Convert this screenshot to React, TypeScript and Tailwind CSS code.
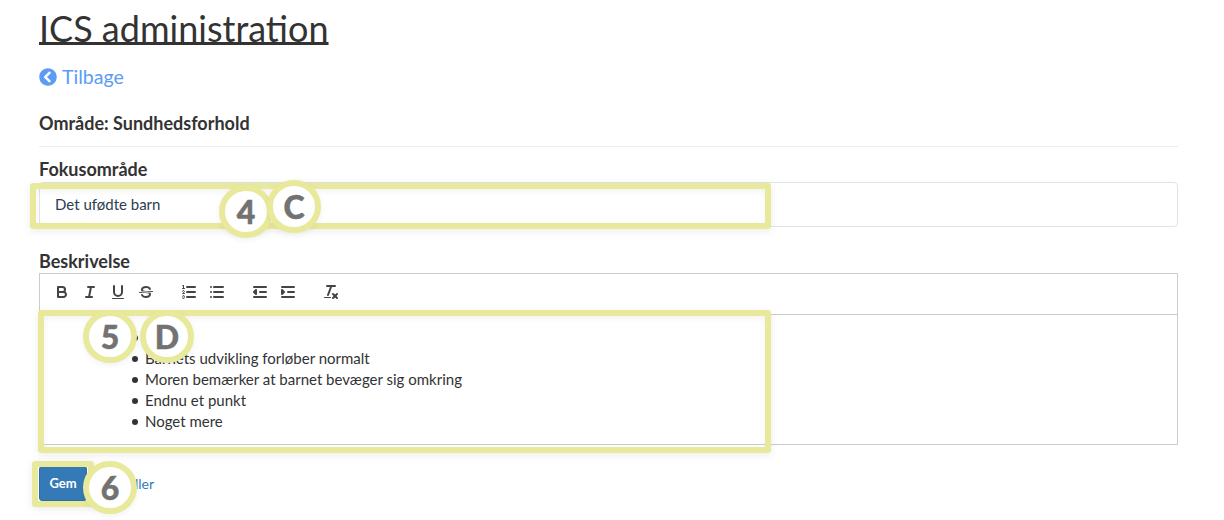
import { FaChevronCircleLeft } from "react-icons/fa";

const items = [
  "",
  "Barnets udvikling forløber normalt",
  "Moren bemærker at barnet bevæger sig omkring",
  "Endnu et punkt",
  "Noget mere",
];

function ToolButton({ children, className = "" }: { children: React.ReactNode; className?: string }) {
  return (
    <span className={`flex h-6 w-7 items-center justify-center ${className}`}>
      <svg
        viewBox="0 0 18 18"
        className="h-[18px] w-[18px] fill-none stroke-[#444] [stroke-linecap:round] [stroke-linejoin:round] [stroke-width:2]"
      >
        {children}
      </svg>
    </span>
  );
}

function Toolbar() {
  const thin = "[stroke-width:1]";
  return (
    <div className="flex h-[41px] items-start border-b border-[#ccc] pl-2 pt-[6px]">
      <ToolButton>
        <path d="M5,4H9.5A2.5,2.5,0,0,1,12,6.5v0A2.5,2.5,0,0,1,9.5,9H5V4Z" />
        <path d="M5,9h5.5A2.5,2.5,0,0,1,13,11.5v0A2.5,2.5,0,0,1,10.5,14H5V9Z" />
      </ToolButton>
      <ToolButton>
        <line x1="7" x2="13" y1="4" y2="4" />
        <line x1="5" x2="11" y1="14" y2="14" />
        <line x1="8" x2="10" y1="14" y2="4" />
      </ToolButton>
      <ToolButton>
        <path d="M5,3V9a4.012,4.012,0,0,0,4,4H9a4.012,4.012,0,0,0,4-4V3" />
        <rect x="3" y="15" width="12" height="1" rx="0.5" className="fill-[#444] stroke-none" />
      </ToolButton>
      <ToolButton>
        <line x1="15.5" x2="2.5" y1="8.5" y2="9.5" className={thin} />
        <path
          className="fill-[#444] stroke-none"
          d="M9.007,8C6.542,7.791,6,7.519,6,6.5,6,5.792,7.283,5,9,5c1.571,0,2.765.679,2.969,1.309a1,1,0,0,0,1.9-.617C13.356,4.106,11.354,3,9,3,6.2,3,4,4.538,4,6.5a3.2,3.2,0,0,0,.5,1.843Z"
        />
        <path
          className="fill-[#444] stroke-none"
          d="M8.984,10C11.457,10.208,12,10.479,12,11.5c0,.708-1.283,1.5-3,1.5-1.571,0-2.765-.679-2.969-1.309a1,1,0,1,0-1.9.617C4.644,13.894,6.646,15,9,15c2.8,0,5-1.538,5-3.5a3.2,3.2,0,0,0-.5-1.843Z"
        />
      </ToolButton>
      <ToolButton className="ml-[15px]">
        <line x1="7" x2="15" y1="4" y2="4" />
        <line x1="7" x2="15" y1="9" y2="9" />
        <line x1="7" x2="15" y1="14" y2="14" />
        <line x1="2.5" x2="4.5" y1="5.5" y2="5.5" className={thin} />
        <path
          className="fill-[#444] stroke-none"
          d="M3.5,6A0.5,0.5,0,0,1,3,5.5V3.085l-0.276.138A0.5,0.5,0,0,1,2.053,3c-0.124-.247-0.023-0.324.224-0.447l1-.5A0.5,0.5,0,0,1,4,2.5v3A0.5,0.5,0,0,1,3.5,6Z"
        />
        <path className={thin} d="M4.5,10.5h-2c0-.234,1.85-1.076,1.85-2.234A0.959,0.959,0,0,0,2.5,8.156" />
        <path
          className={thin}
          d="M2.5,14.846a0.959,0.959,0,0,0,1.85-.109A0.7,0.7,0,0,0,3.75,14a0.688,0.688,0,0,0,.6-0.736,0.959,0.959,0,0,0-1.85-.109"
        />
      </ToolButton>
      <ToolButton>
        <line x1="6" x2="15" y1="4" y2="4" />
        <line x1="6" x2="15" y1="9" y2="9" />
        <line x1="6" x2="15" y1="14" y2="14" />
        <line x1="3" x2="3" y1="4" y2="4" />
        <line x1="3" x2="3" y1="9" y2="9" />
        <line x1="3" x2="3" y1="14" y2="14" />
      </ToolButton>
      <ToolButton className="ml-[15px]">
        <line x1="3" x2="15" y1="14" y2="14" />
        <line x1="3" x2="15" y1="4" y2="4" />
        <line x1="9" x2="15" y1="9" y2="9" />
        <polyline points="5 7 5 11 3 9 5 7" className="fill-[#444]" />
      </ToolButton>
      <ToolButton>
        <line x1="3" x2="15" y1="14" y2="14" />
        <line x1="3" x2="15" y1="4" y2="4" />
        <line x1="9" x2="15" y1="9" y2="9" />
        <polyline points="3 7 3 11 5 9 3 7" className="fill-[#444]" />
      </ToolButton>
      <ToolButton className="ml-[15px]">
        <line x1="5" x2="13" y1="3" y2="3" />
        <line x1="6" x2="9.35" y1="12" y2="3" />
        <line x1="11" x2="15" y1="11" y2="15" />
        <line x1="15" x2="11" y1="11" y2="15" />
        <rect x="2" y="14" width="7" height="1" rx="0.5" className="fill-[#444] stroke-none" />
      </ToolButton>
    </div>
  );
}

function Marker({ label, className }: { label: string; className: string }) {
  return (
    <div
      className={`absolute flex h-[53px] w-[54px] items-center justify-center rounded-full border-[6px] border-[#e8e99b] bg-white text-[32px] font-black text-[#727272] [-webkit-text-stroke:0.5px_#727272] shadow-[0_2px_6px_rgba(0,0,0,0.06)] ${className}`}
    >
      {label}
    </div>
  );
}

export default function App() {
  return (
    <div className="relative h-[520px] w-[1224px] overflow-hidden bg-white font-['Lato',sans-serif] text-[#333]">
      <div className="ml-[39px] w-[1139px]">
        <h1 className="pt-[7px] text-[36px] leading-[43px] underline decoration-[3px] underline-offset-[0px]">
          ICS administration
        </h1>

        <a className="mt-[13px] flex h-[28px] items-center gap-[5px] text-[19.6px] text-[#5c9cf5]">
          <FaChevronCircleLeft className="h-[18px] w-[18px]" />
          Tilbage
        </a>

        <div className="mt-[20px] h-[30px] text-[18px] font-bold leading-[24px]">Område: Sundhedsforhold</div>
        <div className="mt-[5px] border-t border-[#eee]" />

        <label className="mt-[11px] block text-[18px] font-bold leading-[22px]">Fokusområde</label>
        <div className="mt-[2px] flex h-[45px] items-center rounded border border-[#dce4ec] pl-[15px] text-[15px] text-[#2c3e50]">
          Det ufødte barn
        </div>

        <label className="mt-[22px] block text-[18px] font-bold leading-[24px]">Beskrivelse</label>
        <div className="border border-[#ccc]">
          <Toolbar />
          <div className="h-[129px] pt-[12px]">
            <ul className="pl-[92px] text-[15px] leading-[21px]">
              {items.map((item, i) => (
                <li key={i} className="flex h-[21px] items-center gap-[7px]">
                  <span className="h-[6px] w-[6px] rounded-full bg-[#333]" />
                  {item}
                </li>
              ))}
            </ul>
          </div>
        </div>

        <div className="mt-[21px] flex items-center gap-[15px]">
          <button className="h-[35px] w-[48px] rounded-[3px] border border-[#2e6da4] bg-[#337ab7] text-[13px] font-bold text-white">
            Gem
          </button>
          <a className="text-[14px] text-[#337ab7]">Annuller</a>
        </div>
      </div>

      <div className="absolute left-[30px] top-[183px] h-[46px] w-[741px] rounded-[3px] border-[6px] border-[#e8e99b] shadow-[0_2px_8px_rgba(0,0,0,0.08),inset_0_2px_6px_rgba(0,0,0,0.06)]" />
      <div className="absolute left-[38px] top-[310px] h-[143px] w-[733px] rounded-[3px] border-[6px] border-[#e8e99b] shadow-[0_2px_8px_rgba(0,0,0,0.08),inset_0_2px_6px_rgba(0,0,0,0.06)]" />
      <div className="absolute left-[32px] top-[461px] h-[46px] w-[62px] rounded-[3px] border-[6px] border-[#e8e99b] shadow-[0_2px_8px_rgba(0,0,0,0.08)]" />

      <Marker label="4" className="left-[219px] top-[185px]" />
      <Marker label="C" className="left-[267px] top-[180px]" />
      <Marker label="5" className="left-[83px] top-[310px]" />
      <Marker label="D" className="left-[140px] top-[310px]" />
      <Marker label="6" className="left-[83px] top-[461px]" />
    </div>
  );
}
